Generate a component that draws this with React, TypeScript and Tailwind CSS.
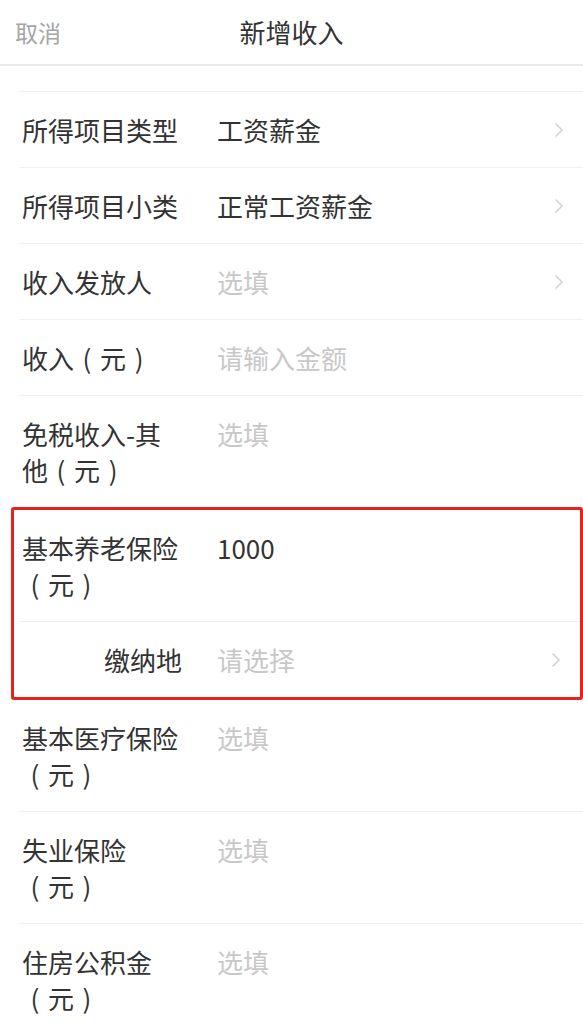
import { ReactNode } from 'react';

interface RowProps {
  label: string;
  value?: string;
  placeholder?: string;
  arrow?: boolean;
  alignRight?: boolean;
  last?: boolean;
}

function Chevron() {
  return (
    <svg width="10" height="16" viewBox="0 0 10 16" className="shrink-0 mt-[10px]">
      <path d="M2 2 L8 8 L2 14" fill="none" stroke="#d2d2d2" strokeWidth="1.6" strokeLinecap="round" strokeLinejoin="round" />
    </svg>
  );
}

// "（元）" is kept together, with the parentheses centred in their em box
function Label({ text }: { text: string }) {
  const unit = '（元）';
  if (!text.endsWith(unit)) return <>{text}</>;
  return (
    <>
      {text.slice(0, -unit.length)}
      <span className="inline-block whitespace-nowrap">
        <span className="inline-block w-[26px] text-center">(</span>元<span className="inline-block w-[26px] text-center">)</span>
      </span>
    </>
  );
}

function Row({ label, value, placeholder, arrow, alignRight, last }: RowProps) {
  return (
    <div className={`flex items-start py-[19.5px] pr-[19px] ${last ? '' : 'border-b border-[#efefef]'}`}>
      <div className={`w-[162px] shrink-0 pl-[2px] text-[#333] ${alignRight ? 'text-right' : ''}`}>
        <Label text={label} />
      </div>
      <div className="ml-[35px] flex-1">
        {value ? (
          <span className="text-[#333]">{value}</span>
        ) : (
          <span className="text-[#c8c8c8]">{placeholder}</span>
        )}
      </div>
      {arrow && <Chevron />}
    </div>
  );
}

function Highlight({ children }: { children: ReactNode }) {
  return (
    <div className="-ml-[9px] pl-[6px] border-[3px] border-[#e5221d] rounded-[3px]">
      {children}
    </div>
  );
}

export default function App() {
  return (
    <div className="w-[583px] h-[1034px] overflow-hidden bg-white text-[26px] leading-[36px] font-['Noto_Sans_CJK_SC',sans-serif]">
      <header className="relative h-[66px] flex items-center px-[15px] border-b-2 border-[#e8e8e8]">
        <span className="text-[23px] text-[#a5a5a5]">取消</span>
        <span className="absolute left-0 right-0 text-center text-[26px] text-[#333] pointer-events-none">新增收入</span>
      </header>

      <div className="mt-[25px] ml-[20px] border-t border-[#efefef]">
        <Row label="所得项目类型" value="工资薪金" arrow />
        <Row label="所得项目小类" value="正常工资薪金" arrow />
        <Row label="收入发放人" placeholder="选填" arrow />
        <Row label="收入（元）" placeholder="请输入金额" />
        <Row label="免税收入-其他（元）" placeholder="选填" last />
        <Highlight>
          <Row label="基本养老保险（元）" value="1000" />
          <Row label="缴纳地" placeholder="请选择" arrow alignRight last />
        </Highlight>
        <Row label="基本医疗保险（元）" placeholder="选填" />
        <Row label="失业保险（元）" placeholder="选填" />
        <Row label="住房公积金（元）" placeholder="选填" />
      </div>
    </div>
  );
}
